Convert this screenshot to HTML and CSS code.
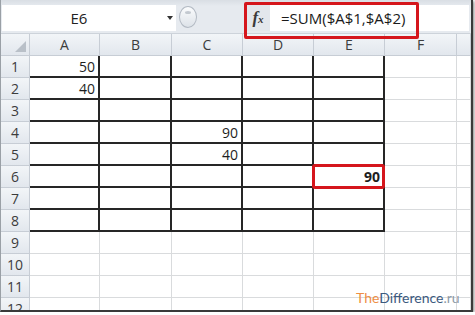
FILE: index.html
```html
<!DOCTYPE html>
<html lang="en">
<head>
  <meta charset="UTF-8">
  <title>Excel SUM</title>
  <link rel="stylesheet" href="styles.css">
</head>
<body>
  <div class="sheet">
    <div class="formula-bar">
      <div class="name-box">E6<span class="arrow"></span></div>
      <div class="splitter"><span class="dot"></span></div>
      <div class="formula">
        <div class="fx"><i>f</i><span>x</span></div>
        <div class="input">=SUM($A$1,$A$2)</div>
      </div>
    </div>
    <div class="grid" id="grid">
      <!-- cells are added by the script below -->
    </div>
    <div class="watermark"><span class="the">The</span><span class="diff">Difference</span><span class="ru">.ru</span></div>
  </div>
  <script>
    // Sheet data (last column is only partly visible, so no letter)
    const cols = ['A', 'B', 'C', 'D', 'E', 'F', ''];
    const values = { A1: 50, A2: 40, C4: 90, C5: 40, E6: 90 };
    const grid = document.getElementById('grid');

    function addCell(cls, text) {
      const cell = document.createElement('div');
      cell.className = cls;
      cell.textContent = text;
      grid.appendChild(cell);
      return cell;
    }

    // Header row
    addCell('hd corner', '');
    cols.forEach(c => addCell('hd', c));

    // Rows
    for (let r = 1; r <= 12; r++) {
      addCell('hd rownum', r);
      cols.forEach((c, i) => {
        const key = c + r;
        let cls = 'cell';
        if (i < 5 && r <= 8) cls += ' b';
        if (key === 'E6') cls += ' sel';
        addCell(cls, values[key] !== undefined ? values[key] : '');
      });
    }
  </script>
</body>
</html>
```

FILE: styles.css
```css
* {
  margin: 0;
  padding: 0;
  box-sizing: border-box;
}

body {
  background: #fff;
  font-family: 'Open Sans', sans-serif;
}

.sheet {
  position: relative;
  width: 473px;
  height: 312px;
  border-left: 1px solid #9aa0a6;
  border-right: 2px solid #3a3a3a;
  border-bottom: 2px solid #3a3a3a;
  box-shadow: 1px 1px 3px rgba(0, 0, 0, 0.5);
  overflow: hidden;
  background: #fff;
}

.formula-bar {
  display: flex;
  align-items: flex-start;
  height: 34px;
  padding: 5px 0 0 1px;
  background: linear-gradient(#d9dee4, #e6eaef 6px);
  border-bottom: 1px solid #cdd3da;
}

.name-box {
  position: relative;
  width: 174px;
  height: 26px;
  padding-right: 20px;
  background: #fff;
  font-size: 15px;
  line-height: 26px;
  text-align: center;
  color: #222;
}

.arrow {
  position: absolute;
  right: 3px;
  top: 11px;
  border-top: 4px solid #333;
  border-left: 3px solid transparent;
  border-right: 3px solid transparent;
}

.splitter {
  position: relative;
  width: 18px;
  height: 22px;
  margin: 1px 0 0 3px;
  border: 1px solid #b3bac3;
  border-radius: 50%;
  background: linear-gradient(#fbfcfd, #dde2e8);
}

.dot {
  position: absolute;
  left: 5px;
  top: 4px;
  width: 6px;
  height: 3px;
  border-radius: 50%;
  background: #c3c9d0;
}

.formula {
  position: relative;
  display: flex;
  flex: 1;
  height: 26px;
  margin: 0 2px 0 49px;
}

.formula::after {
  content: '';
  position: absolute;
  left: -2px;
  top: -3px;
  width: 169px;
  height: 31px;
  border: 3px solid #d5161c;
  border-radius: 2px;
}

.fx {
  width: 24px;
  background: #e3e7ec;
  font-family: 'Liberation Serif', serif;
  font-size: 17px;
  font-weight: 700;
  line-height: 26px;
  text-align: center;
  color: #3a3a3a;
}

.fx span {
  font-style: italic;
  font-size: 11px;
}

.input {
  flex: 1;
  padding-left: 11px;
  background: #fff;
  font-size: 15px;
  line-height: 26px;
  color: #1a1a1a;
}

.grid {
  display: grid;
  grid-template-columns: 29px 70px 72px 71px 71px 71px 72px 1fr;
  grid-auto-rows: 22px;
}

.hd {
  background: linear-gradient(#f2f5f8, #e2e7ed);
  border-right: 1px solid #c7cdd5;
  border-bottom: 1px solid #c7cdd5;
  font-size: 14px;
  line-height: 21px;
  text-align: center;
  color: #3c3c3c;
}

.corner {
  position: relative;
}

.corner::after {
  content: '';
  position: absolute;
  right: 3px;
  bottom: 3px;
  border-left: 11px solid transparent;
  border-bottom: 11px solid #b9c0c8;
}

.cell {
  border-right: 1px solid #d9dbdd;
  border-bottom: 1px solid #d9dbdd;
  padding-right: 3px;
  font-size: 14px;
  line-height: 21px;
  text-align: right;
  color: #1e1e1e;
}

.cell.b {
  border-right: 2px solid #262626;
  border-bottom: 2px solid #262626;
}

.sel {
  position: relative;
  font-weight: 700;
}

.sel::after {
  content: '';
  position: absolute;
  left: -2px;
  top: -2px;
  right: -2px;
  bottom: -3px;
  border: 3px solid #d5161c;
  border-radius: 3px;
}

.watermark {
  position: absolute;
  left: 355px;
  top: 289px;
  font-family: 'Lato', sans-serif;
  font-size: 14px;
  line-height: 18px;
}

.the {
  color: #ee8f45;
}

.diff {
  color: #3c5a7e;
}

.ru {
  color: #8d9aa6;
}
```
